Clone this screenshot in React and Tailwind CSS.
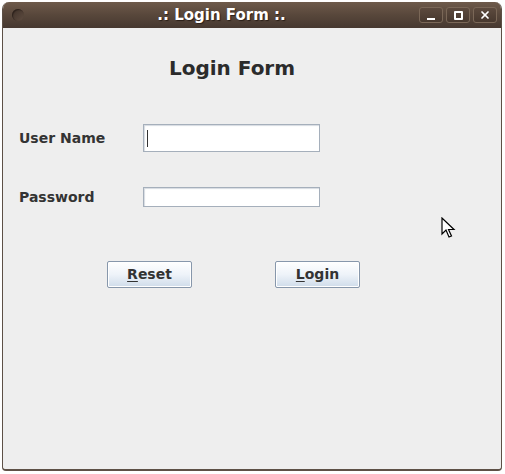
import { X } from "lucide-react";

const font = { fontFamily: '"DejaVu Sans", "Liberation Sans", sans-serif' };

function TitleButton({ children }) {
  return (
    <div className="flex h-[16px] w-[24px] items-center justify-center rounded-[3px] border border-[#7a6757] bg-gradient-to-b from-[#5c4a3e] to-[#47382e] text-white">
      {children}
    </div>
  );
}

function JButton({ label }) {
  return (
    <button
      type="button"
      className="h-[27px] w-[85px] rounded-[2px] border border-[#8797ab] bg-gradient-to-b from-[#ffffff] via-[#eef3f9] to-[#cfdcea] text-[14px] font-bold text-[#333333] shadow-[inset_0_0_0_1px_#ffffff]"
    >
      <span className="underline underline-offset-2">{label[0]}</span>
      {label.slice(1)}
    </button>
  );
}

export default function App() {
  return (
    <div className="h-[474px] w-[505px] bg-white pl-[2px] pt-[2px]" style={font}>
      <div className="relative flex h-[469px] w-[500px] flex-col overflow-hidden rounded-t-[7px] rounded-b-[4px] border border-b-2 border-t-0 border-[#5d5046] bg-[#eeeeee]">
        {/* title bar */}
        <div className="flex h-[26px] items-center bg-gradient-to-b from-[#6e5a4b] via-[#58473b] to-[#463830] pl-[9px] pr-[4px]">
          <div className="h-[12px] w-[12px] rounded-full bg-gradient-to-br from-[#3f3129] to-[#5e4c40] shadow-[inset_1px_1px_1px_#2d221c]" />
          <div className="flex-1 text-center text-[15px] font-bold leading-none text-white [text-shadow:1px_1px_1px_#2a1f18]">
            .: Login Form :.
          </div>
          <div className="flex gap-[3px]">
            <TitleButton>
              <div className="mt-[7px] h-[2px] w-[8px] bg-white" />
            </TitleButton>
            <TitleButton>
              <div className="h-[9px] w-[9px] rounded-[1px] border-[2px] border-white" />
            </TitleButton>
            <TitleButton>
              <X size={12} strokeWidth={3.5} />
            </TitleButton>
          </div>
        </div>

        {/* content */}
        <div className="flex flex-col px-[16px]">
          <h1 className="mt-[28px] pr-[40px] text-center text-[20px] font-bold leading-[24px] text-[#2b2b2b]">
            Login Form
          </h1>

          <div className="mt-[44px] flex h-[28px] items-center">
            <label className="w-[124px] text-[14px] font-bold text-[#333333]">User Name</label>
            <div className="flex h-[28px] w-[177px] items-center border border-[#a5afbb] bg-white pl-[3px] shadow-[inset_1px_1px_1px_#d6dbe1]">
              <div className="h-[17px] w-[1px] bg-[#333333]" />
            </div>
          </div>

          <div className="mt-[35px] flex h-[20px] items-center">
            <label className="w-[124px] text-[14px] font-bold text-[#333333]">Password</label>
            <div className="h-[20px] w-[177px] border border-[#a5afbb] bg-white shadow-[inset_1px_1px_1px_#d6dbe1]" />
          </div>

          <div className="mt-[54px] flex gap-[83px] pl-[88px]">
            <JButton label="Reset" />
            <JButton label="Login" />
          </div>
        </div>

        {/* mouse pointer */}
        <svg
          className="absolute left-[438px] top-[215px]"
          width="16"
          height="24"
          viewBox="0 0 16 24"
        >
          <path
            d="M1 1 L1 17 L5 13 L8 20 L10.5 19 L7.5 12.5 L13 12.5 Z"
            fill="#ffffff"
            stroke="#000000"
            strokeWidth="1.2"
            strokeLinejoin="miter"
          />
        </svg>
      </div>
    </div>
  );
}
